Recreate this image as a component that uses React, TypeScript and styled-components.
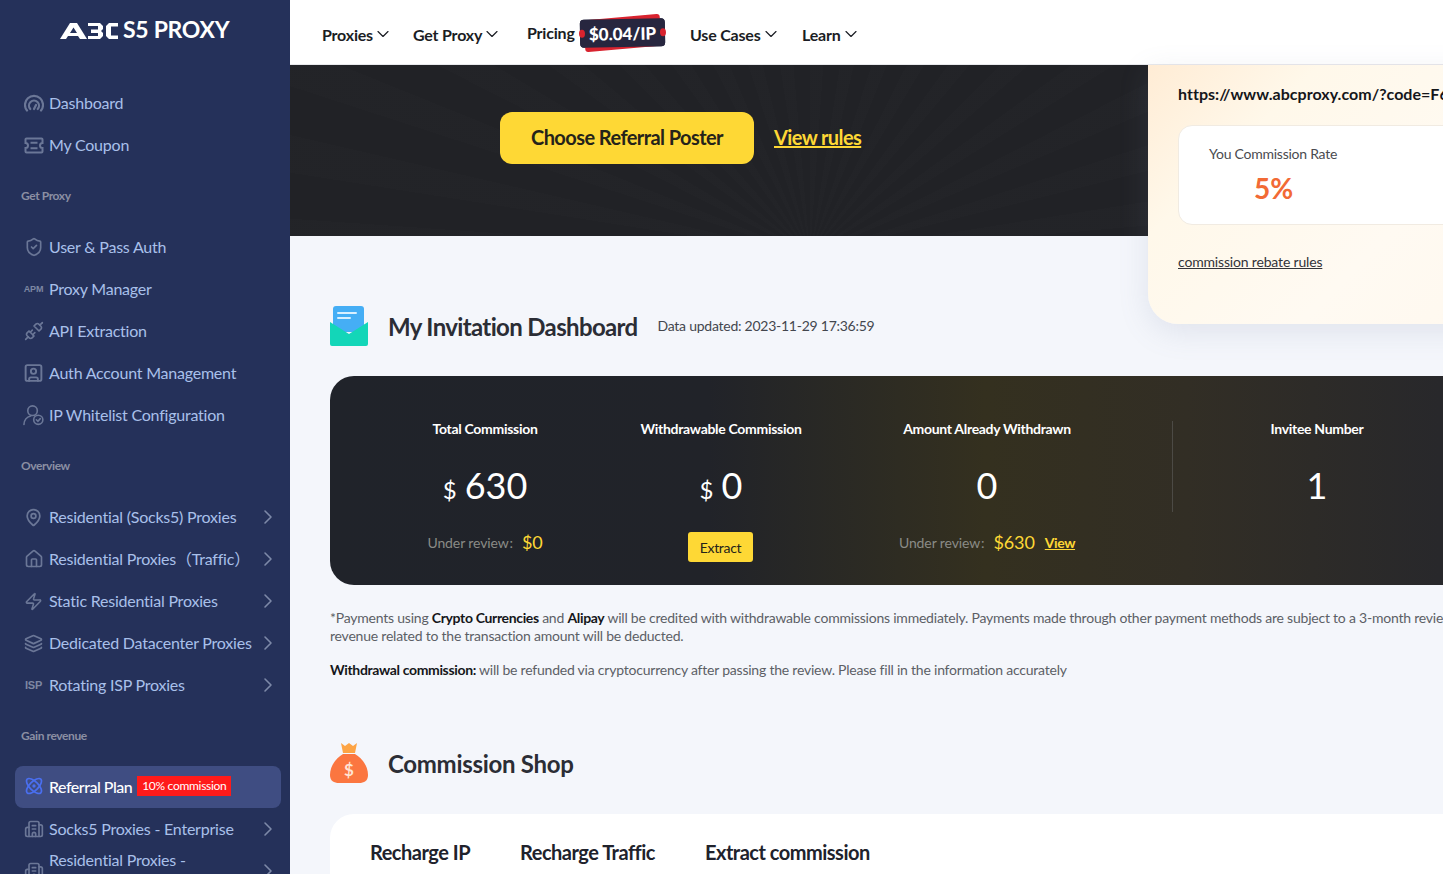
import React from 'react';
import styled, { createGlobalStyle } from 'styled-components';
import {
  Atom,
  Building2,
  ChevronDown,
  ChevronRight,
  House,
  Layers,
  MapPin,
  ShieldCheck,
  Unplug,
  SquareUser,
  Zap,
} from 'lucide-react';

const FONT = `"Lato", "Noto Sans", "Noto Sans CJK SC", sans-serif`;

const Global = createGlobalStyle`
  html, body { margin:0; padding:0; height:100%; overflow:hidden; }
  body { font-family:${FONT}; background:#f4f6fb; }
  * { box-sizing:border-box; }
`;

const Page = styled.div`
  display:flex;
  width:1443px;
  height:874px;
  overflow:hidden;
`;

const Sidebar = styled.aside`
  width:290px;
  height:874px;
  flex-shrink:0;
  background:#25315a;
  overflow:hidden;
`;

const LogoRow = styled.div`
  height:83px;
  padding:16px 0 0 60px;
  display:flex;
  align-items:flex-start;
  gap:5px;
  svg { margin-top:7px; }
`;

const LogoName = styled.div`
  color:#fff;
  font-size:23px;
  line-height:26px;
  font-weight:700;
  letter-spacing:-0.3px;
`;

const SectionLabel = styled.div<{ $h?: number }>`
  height:${p => p.$h || 60}px;
  padding:20px 0 0 21px;
  font-size:12px;
  line-height:18px;
  font-weight:700;
  color:#8b8fa3;
  letter-spacing:-0.4px;
`;

const Item = styled.div<{ $active?: boolean }>`
  height:42px;
  margin:0 9px ${p => (p.$active ? 1 : 0)}px 15px;
  padding:0 8px 2px;
  display:flex;
  align-items:center;
  gap:5px;
  border-radius:8px;
  background:${p => (p.$active ? '#3f4d82' : 'transparent')};
  color:${p => (p.$active ? '#ffffff' : '#a9c0ea')};
  font-size:16px;
  letter-spacing:-0.22px;
  font-weight:${p => (p.$active ? 500 : 400)};
  white-space:nowrap;
`;

const ItemIcon = styled.span<{ $blue?: boolean }>`
  width:21px;
  height:21px;
  flex-shrink:0;
  display:flex;
  align-items:center;
  justify-content:center;
  color:${p => (p.$blue ? '#4a6ff0' : '#6b7797')};
`;

const TextIcon = styled.span<{ $size: number }>`
  font-family:"Liberation Sans", sans-serif;
  font-size:${p => p.$size}px;
  font-weight:700;
  color:#7d87a3;
  letter-spacing:-0.2px;
`;

const ItemLabel = styled.span`
  flex:1;
  min-width:0;
  line-height:22px;
`;

const Arrow = styled(ChevronRight)`
  color:#7d89a8;
  flex-shrink:0;
  margin-right:-7px;
`;

const ActiveLabel = styled.span`
  letter-spacing:-0.5px;
`;

const Tag = styled.span`
  background:#ff1a1a;
  color:#fff;
  font-size:12px;
  line-height:20px;
  font-weight:400;
  padding:0 5px;
  letter-spacing:-0.3px;
`;

const Content = styled.div`
  flex:1;
  min-width:0;
  position:relative;
  overflow:hidden;
`;

const Header = styled.header`
  height:65px;
  background:#fff;
  border-bottom:1px solid #e8e9ec;
  padding:4px 0 0 32px;
  display:flex;
  align-items:center;
`;

const NavItem = styled.div<{ $w: number; $raised?: boolean }>`
  width:${p => p.$w}px;
  display:flex;
  align-items:center;
  font-size:16px;
  font-weight:700;
  color:#1b1d24;
  letter-spacing:-0.2px;
  margin-bottom:${p => (p.$raised ? 4 : 0)}px;
`;

const PriceBadge = styled.div`
  position:relative;
  width:85px;
  height:28px;
  margin:-3px 25px 0 5px;
  background:#27263f;
  border-radius:4px;
  transform:rotate(-1deg);
  color:#fff;
  font-size:17px;
  font-weight:900;
  display:flex;
  align-items:center;
  justify-content:center;
  z-index:0;
  &::before {
    content:'';
    position:absolute;
    left:4px;
    right:4px;
    top:-2px;
    bottom:-2px;
    background:#d8232f;
    border-radius:3px;
    transform:rotate(-4deg);
    z-index:-2;
  }
  &::after {
    content:'';
    position:absolute;
    inset:0;
    background:#27263f;
    border-radius:4px;
    z-index:-1;
  }
`;

const BadgeNotch = styled.i<{ $side: 'left' | 'right' }>`
  position:absolute;
  top:10px;
  ${p => p.$side}:-1px;
  width:6px;
  height:8px;
  border-radius:50%;
  background:#d8232f;
`;

const Hero = styled.section`
  height:171px;
  background:
    repeating-conic-gradient(from 0deg at 520px 190px, rgba(255,255,255,0.008) 0deg 4deg, rgba(0,0,0,0) 4deg 9deg),
    #212226;
  padding:47px 0 0 210px;
  display:flex;
  align-items:flex-start;
  gap:20px;
`;

const PosterButton = styled.button`
  width:254px;
  height:52px;
  border:0;
  border-radius:12px;
  background:#fed835;
  color:#25231a;
  font-family:${FONT};
  font-size:20px;
  font-weight:700;
  letter-spacing:-0.57px;
  padding-bottom:3px;
`;

const RulesLink = styled.a`
  color:#fed835;
  font-size:20px;
  line-height:50px;
  text-decoration:underline;
  font-weight:700;
  letter-spacing:-0.6px;
`;

const InviteCard = styled.div`
  position:absolute;
  left:858px;
  top:65px;
  width:400px;
  height:259px;
  padding:17px 0 0 30px;
  border-radius:0 0 0 30px;
  background:linear-gradient(135deg, #ffecd5 0%, #fff8ea 26%, #fffaf2 62%, #fff8ee 100%);
  box-shadow:0 8px 30px rgba(120,130,160,0.16);
`;

const InviteUrl = styled.div`
  font-size:16px;
  line-height:24px;
  font-weight:700;
  letter-spacing:0.03px;
  color:#15161a;
  white-space:nowrap;
  overflow:hidden;
`;

const RateBox = styled.div`
  margin-top:19px;
  height:100px;
  width:370px;
  background:#fff;
  border:1px solid #f1ebe2;
  border-radius:14px 0 0 14px;
  padding:19px 0 0 30px;
`;

const RateLabel = styled.div`
  font-size:14px;
  line-height:18px;
  letter-spacing:-0.25px;
  color:#4a4b50;
`;

const RateValue = styled.div`
  width:129px;
  margin-top:7px;
  text-align:center;
  font-size:28px;
  line-height:36px;
  font-weight:700;
  color:#f26a35;
`;

const RebateLink = styled.a`
  display:block;
  margin-top:27px;
  font-size:14px;
  line-height:20px;
  letter-spacing:-0.17px;
  color:#33343a;
  text-decoration:underline;
`;

const Main = styled.main`
  padding:0 0 0 40px;
  width:1400px;
`;

const TitleRow = styled.div<{ $top: number; $bottom: number }>`
  display:flex;
  align-items:center;
  height:42px;
  margin:${p => p.$top}px 0 ${p => p.$bottom}px;
`;

const TitleIcon = styled.span`
  width:38px;
  height:42px;
  margin-right:20px;
  display:flex;
`;

const Title = styled.h2<{ $tight?: boolean }>`
  margin:0 20px 0 0;
  font-size:24px;
  font-weight:700;
  letter-spacing:${p => (p.$tight ? '-0.65px' : '-0.3px')};
  color:#2b2d35;
`;

const Updated = styled.span`
  font-size:14px;
  letter-spacing:-0.25px;
  color:#43464e;
  margin-bottom:2px;
`;

const StatsPanel = styled.div`
  width:1260px;
  height:209px;
  border-radius:24px;
  background:linear-gradient(90deg, #20232a 0%, #212329 30%, #34301f 52%, #322e25 68%, #28282b 88%);
  display:grid;
  grid-template-columns:310px 162px 370px 290px;
  padding-top:44px;
`;

const Stat = styled.div<{ $divider?: boolean }>`
  position:relative;
  display:flex;
  flex-direction:column;
  align-items:center;
  white-space:nowrap;
  ${p =>
    p.$divider &&
    `&::before {
      content:'';
      position:absolute;
      left:0;
      top:1px;
      height:91px;
      width:1px;
      background:#4c4a45;
    }`}
`;

const StatTitle = styled.div`
  font-size:14px;
  line-height:18px;
  color:#fff;
  font-weight:700;
  letter-spacing:-0.3px;
`;

const StatValue = styled.div`
  margin-top:24px;
  height:46px;
  font-size:36px;
  line-height:46px;
  color:#fff;
  display:flex;
  align-items:baseline;
  gap:8px;
`;

const Dollar = styled.span`
  font-size:24px;
`;

const Review = styled.div`
  margin-top:22px;
  display:flex;
  align-items:center;
  height:24px;
  font-size:14px;
  letter-spacing:-0.1px;
  color:#8a8b86;
`;

const ReviewAmount = styled.span`
  font-size:18px;
  color:#fed835;
  margin-left:9px;
`;

const ViewLink = styled.a`
  margin-left:10px;
  font-size:14px;
  font-weight:700;
  letter-spacing:-0.4px;
  color:#fed835;
  text-decoration:underline;
`;

const ExtractButton = styled.button`
  margin:24px 1px 0 0;
  width:65px;
  height:30px;
  border:0;
  padding:0;
  border-radius:3px;
  background:#fed835;
  color:#25231a;
  font-family:${FONT};
  font-size:14px;
  letter-spacing:-0.3px;
`;

const Note = styled.p<{ $top: number }>`
  margin:${p => p.$top}px 0 0;
  font-size:14px;
  line-height:18px;
  letter-spacing:-0.22px;
  color:#5c5f66;
  white-space:nowrap;
  b { color:#15161a; font-weight:700; letter-spacing:-0.35px; }
`;

const ShopCard = styled.div`
  width:1260px;
  height:200px;
  background:#fff;
  border-radius:24px 0 0 0;
  padding:25px 0 0 40px;
  display:flex;
  gap:50px;
`;

const ShopTab = styled.div`
  font-size:20px;
  line-height:26px;
  font-weight:700;
  letter-spacing:-0.5px;
  color:#20222c;
`;

const DashIcon = () => (
  <svg width="20" height="20" viewBox="0 0 20 20" fill="none" stroke="currentColor" strokeWidth="2.2" strokeLinecap="round">
    <path d="M3 17.500A9 9 0 1 1 17 17.500" />
    <path d="M6.300 16A5 5 0 1 1 13.700 16" />
    <path d="M10 16l2-4" />
  </svg>
);

const CouponIcon = () => (
  <svg width="20" height="17" viewBox="0 0 20 17" fill="none" stroke="currentColor" strokeWidth="2">
    <path d="M2.500 1.500h15a1 1 0 0 1 1 1V6a2.500 2.500 0 0 0 0 5v3.500a1 1 0 0 1-1 1h-15a1 1 0 0 1-1-1V11a2.500 2.500 0 0 0 0-5V2.500a1 1 0 0 1 1-1z" />
    <path d="M6.500 5.800h7M6.500 11.200h7" />
  </svg>
);

const WhitelistIcon = () => (
  <svg width="22" height="22" viewBox="0 0 22 22" fill="none" stroke="currentColor" strokeWidth="1.700" strokeLinecap="round">
    <circle cx="10" cy="6.500" r="5" />
    <path d="M1 21c0-4.500 3-8 7-9" />
    <circle cx="16" cy="16" r="4.800" />
    <path d="M14 16l1.600 1.600 2.500-2.800" />
  </svg>
);

const LogoMark = () => (
  <svg width="58" height="16" viewBox="0 0 58 16" fill="#fff" fillRule="evenodd">
    <path d="M0 16L10 0H17L27 16H20L18 13H8L6 16ZM13.500 4.500L10 10H17Z" />
    <polygon points="28,0 40,0 43,3 43,6 41,8 43,10 43,13 40,16 28,16 28,13 38,13 38,10 31,10 31,6.500 38,6.500 38,3 28,3" />
    <polygon points="46,3 49,0 58,0 58,3.500 51,3.500 51,12.500 58,12.500 58,16 49,16 46,13" />
  </svg>
);

const MailIcon = () => (
  <svg width="38" height="42" viewBox="0 0 38 42">
    <rect x="3" y="1" width="31" height="26" rx="3" fill="#45aef5" />
    <path d="M8 8h18M8 13h12" stroke="#d9f0ff" strokeWidth="2" strokeLinecap="round" />
    <path d="M0 17l19 12 19-12v22a2 2 0 0 1-2 2H2a2 2 0 0 1-2-2z" fill="#13d6b8" />
  </svg>
);

const BagIcon = () => (
  <svg width="38" height="42" viewBox="0 0 38 42">
    <path d="M11 1l4 3 4-3 4 3 4-3-2 10H13z" fill="#fda445" />
    <path d="M13 12h12c7 4 13 12 13 21 0 6-4 8-9 8H9c-5 0-9-2-9-8 0-9 6-17 13-21z" fill="#fb7640" />
    <text x="19" y="34" textAnchor="middle" fontFamily={FONT} fontWeight="700" fontSize="17" fill="#ffe3d4">$</text>
  </svg>
);

const topItems = [
  { icon: <DashIcon />, label: 'Dashboard' },
  { icon: <CouponIcon />, label: 'My Coupon' },
];

const proxyItems = [
  { icon: <ShieldCheck size={20} />, label: 'User & Pass Auth' },
  { icon: <TextIcon $size={9}>APM</TextIcon>, label: 'Proxy Manager' },
  { icon: <Unplug size={20} />, label: 'API Extraction' },
  { icon: <SquareUser size={22} strokeWidth={2.2} />, label: 'Auth Account Management' },
  { icon: <WhitelistIcon />, label: 'IP Whitelist Configuration' },
];

const overviewItems = [
  { icon: <MapPin size={19} strokeWidth={2.2} />, label: 'Residential (Socks5) Proxies' },
  { icon: <House size={20} />, label: 'Residential Proxies（Traffic）' },
  { icon: <Zap size={19} />, label: 'Static Residential Proxies' },
  { icon: <Layers size={19} strokeWidth={2.2} />, label: 'Dedicated Datacenter Proxies' },
  { icon: <TextIcon $size={11}>ISP</TextIcon>, label: 'Rotating ISP Proxies' },
];

const navs = [
  { label: 'Proxies', w: 91 },
  { label: 'Get Proxy', w: 114 },
];

const navsAfter = [
  { label: 'Use Cases', w: 112 },
  { label: 'Learn', w: 70 },
];

export default function App() {
  return (
    <Page>
      <Global />
      <Sidebar>
        <LogoRow>
          <LogoMark />
          <LogoName>S5 PROXY</LogoName>
        </LogoRow>
        {topItems.map(i => (
          <Item key={i.label}>
            <ItemIcon>{i.icon}</ItemIcon>
            <ItemLabel>{i.label}</ItemLabel>
          </Item>
        ))}
        <SectionLabel>Get Proxy</SectionLabel>
        {proxyItems.map(i => (
          <Item key={i.label}>
            <ItemIcon>{i.icon}</ItemIcon>
            <ItemLabel>{i.label}</ItemLabel>
          </Item>
        ))}
        <SectionLabel>Overview</SectionLabel>
        {overviewItems.map(i => (
          <Item key={i.label}>
            <ItemIcon>{i.icon}</ItemIcon>
            <ItemLabel>{i.label}</ItemLabel>
            <Arrow size={24} strokeWidth={1.6} />
          </Item>
        ))}
        <SectionLabel $h={59}>Gain revenue</SectionLabel>
        <Item $active>
          <ItemIcon $blue><Atom size={20} /></ItemIcon>
          <ActiveLabel>Referral Plan</ActiveLabel>
          <Tag>10% commission</Tag>
        </Item>
        <Item>
          <ItemIcon><Building2 size={20} /></ItemIcon>
          <ItemLabel>Socks5 Proxies - Enterprise</ItemLabel>
          <Arrow size={24} strokeWidth={1.6} />
        </Item>
        <Item>
          <ItemIcon><Building2 size={20} /></ItemIcon>
          <ItemLabel>Residential Proxies -<br />Enterprise</ItemLabel>
          <Arrow size={24} strokeWidth={1.6} />
        </Item>
      </Sidebar>
      <Content>
        <Header>
          {navs.map(n => (
            <NavItem key={n.label} $w={n.w}>
              {n.label} <ChevronDown size={20} strokeWidth={1.4} />
            </NavItem>
          ))}
          <NavItem $w={48} $raised>Pricing</NavItem>
          <PriceBadge>
            <BadgeNotch $side="left" />
            $0.04/IP
            <BadgeNotch $side="right" />
          </PriceBadge>
          {navsAfter.map(n => (
            <NavItem key={n.label} $w={n.w}>
              {n.label} <ChevronDown size={20} strokeWidth={1.4} />
            </NavItem>
          ))}
        </Header>
        <Hero>
          <PosterButton>Choose Referral Poster</PosterButton>
          <RulesLink>View rules</RulesLink>
        </Hero>
        <InviteCard>
          <InviteUrl>https://www.abcproxy.com/?code=F6</InviteUrl>
          <RateBox>
            <RateLabel>You Commission Rate</RateLabel>
            <RateValue>5%</RateValue>
          </RateBox>
          <RebateLink>commission rebate rules</RebateLink>
        </InviteCard>
        <Main>
          <TitleRow $top={69} $bottom={29}>
            <TitleIcon><MailIcon /></TitleIcon>
            <Title $tight>My Invitation Dashboard</Title>
            <Updated>Data updated: 2023-11-29 17:36:59</Updated>
          </TitleRow>
          <StatsPanel>
            <Stat>
              <StatTitle>Total Commission</StatTitle>
              <StatValue><Dollar>$</Dollar>630</StatValue>
              <Review>Under review{'\u200A'}:<ReviewAmount>$0</ReviewAmount></Review>
            </Stat>
            <Stat>
              <StatTitle>Withdrawable Commission</StatTitle>
              <StatValue><Dollar>$</Dollar>0</StatValue>
              <ExtractButton>Extract</ExtractButton>
            </Stat>
            <Stat>
              <StatTitle>Amount Already Withdrawn</StatTitle>
              <StatValue>0</StatValue>
              <Review>Under review{'\u200A'}:<ReviewAmount>$630</ReviewAmount><ViewLink>View</ViewLink></Review>
            </Stat>
            <Stat $divider>
              <StatTitle>Invitee Number</StatTitle>
              <StatValue>1</StatValue>
            </Stat>
          </StatsPanel>
          <Note $top={24}>
            *Payments using <b>Crypto Currencies</b> and <b>Alipay</b> will be credited with withdrawable commissions immediately. Payments made through other payment methods are subject to a 3-month review period, and the
            <br />
            revenue related to the transaction amount will be deducted.
          </Note>
          <Note $top={16}>
            <b>Withdrawal commission:</b> will be refunded via cryptocurrency after passing the review. Please fill in the information accurately
          </Note>
          <TitleRow $top={63} $bottom={30}>
            <TitleIcon><BagIcon /></TitleIcon>
            <Title>Commission Shop</Title>
          </TitleRow>
          <ShopCard>
            <ShopTab>Recharge IP</ShopTab>
            <ShopTab>Recharge Traffic</ShopTab>
            <ShopTab>Extract commission</ShopTab>
          </ShopCard>
        </Main>
      </Content>
    </Page>
  );
}
